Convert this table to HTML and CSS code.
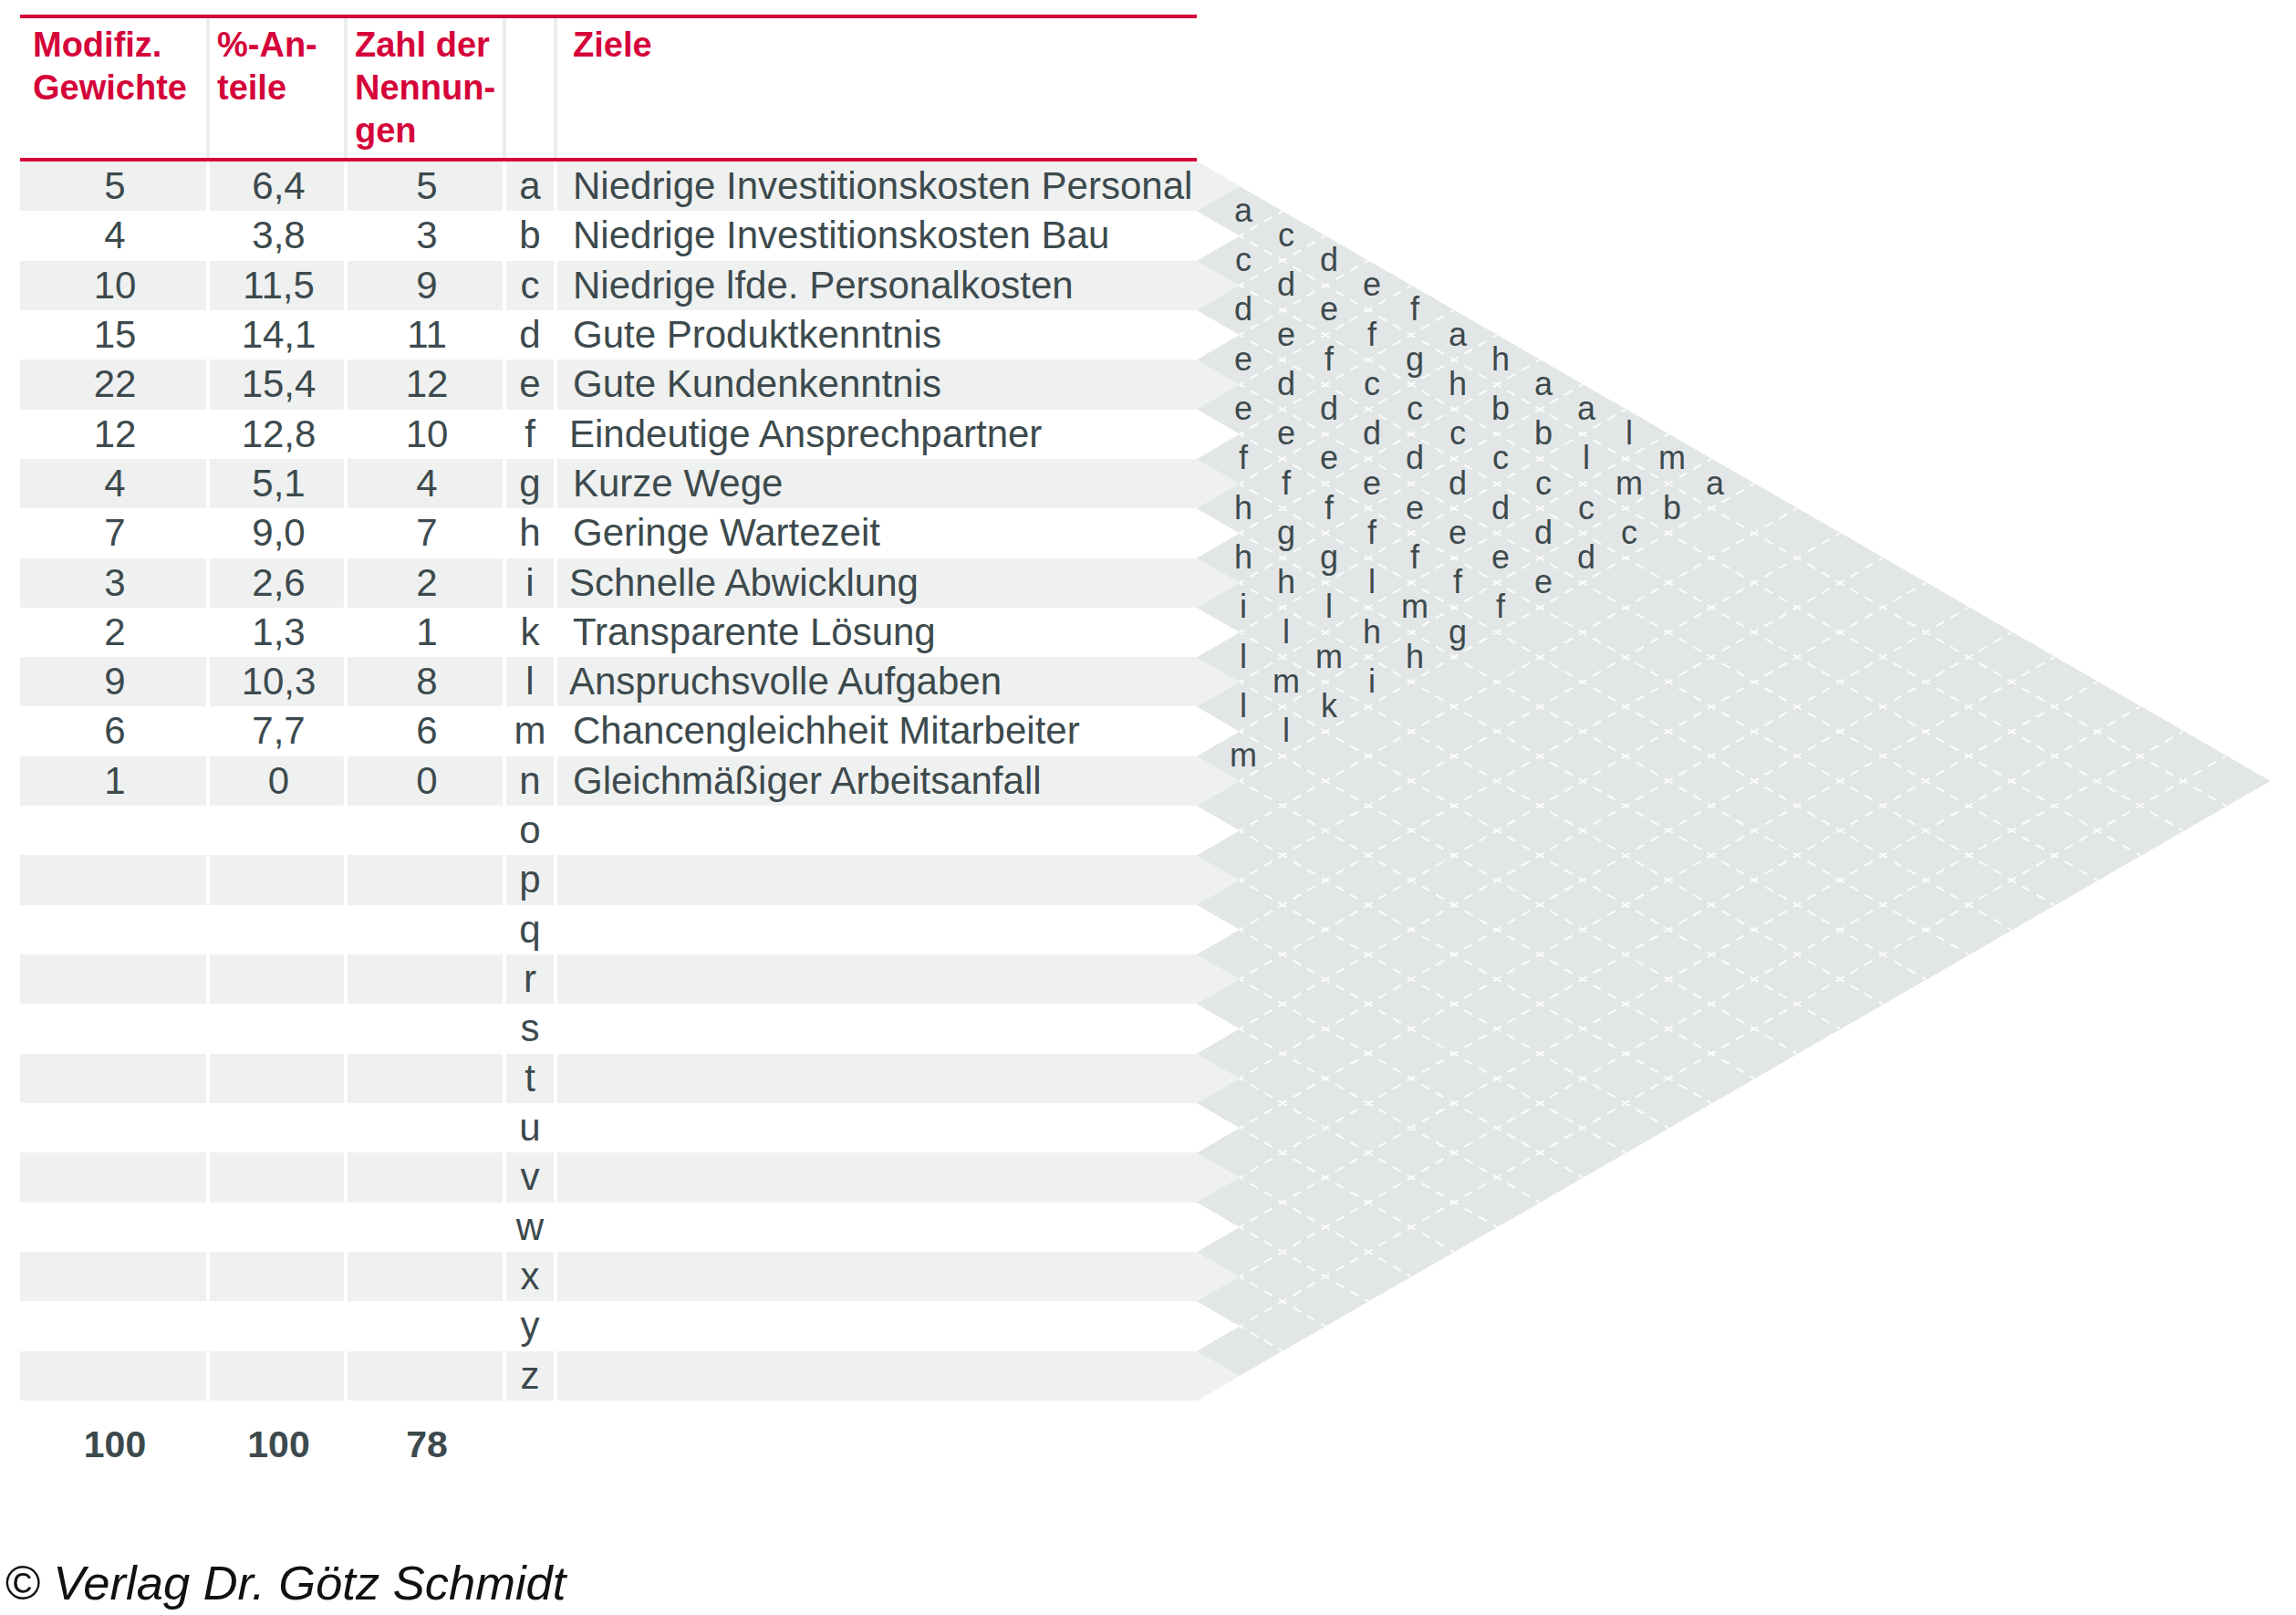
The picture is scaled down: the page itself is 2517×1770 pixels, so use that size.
FILE: index.html
```html
<!DOCTYPE html>
<html lang="de">
<head>
<meta charset="utf-8">
<title>Paarweiser Vergleich – Ziele</title>
<link rel="stylesheet" href="styles.css">
</head>
<body>
<div class="page">
  <div class="chart">
    <div class="table">
      <div class="head">
        <div class="c1">Modifiz.<br>Gewichte</div>
        <div>%-An-<br>teile</div>
        <div>Zahl der<br>Nennun-<br>gen</div>
        <div></div>
        <div class="c5">Ziele</div>
      </div>
      <div class="rows">
        <div class="row"><span>5</span><span>6,4</span><span>5</span><span class="key">a</span><span class="goal">Niedrige Investitionskosten Personal</span></div>
        <div class="row"><span>4</span><span>3,8</span><span>3</span><span class="key">b</span><span class="goal">Niedrige Investitionskosten Bau</span></div>
        <div class="row"><span>10</span><span>11,5</span><span>9</span><span class="key">c</span><span class="goal">Niedrige lfde. Personalkosten</span></div>
        <div class="row"><span>15</span><span>14,1</span><span>11</span><span class="key">d</span><span class="goal">Gute Produktkenntnis</span></div>
        <div class="row"><span>22</span><span>15,4</span><span>12</span><span class="key">e</span><span class="goal">Gute Kundenkenntnis</span></div>
        <div class="row"><span>12</span><span>12,8</span><span>10</span><span class="key">f</span><span class="goal tight">Eindeutige Ansprechpartner</span></div>
        <div class="row"><span>4</span><span>5,1</span><span>4</span><span class="key">g</span><span class="goal">Kurze Wege</span></div>
        <div class="row"><span>7</span><span>9,0</span><span>7</span><span class="key">h</span><span class="goal">Geringe Wartezeit</span></div>
        <div class="row"><span>3</span><span>2,6</span><span>2</span><span class="key">i</span><span class="goal tight">Schnelle Abwicklung</span></div>
        <div class="row"><span>2</span><span>1,3</span><span>1</span><span class="key">k</span><span class="goal">Transparente Lösung</span></div>
        <div class="row"><span>9</span><span>10,3</span><span>8</span><span class="key">l</span><span class="goal tight">Anspruchsvolle Aufgaben</span></div>
        <div class="row"><span>6</span><span>7,7</span><span>6</span><span class="key">m</span><span class="goal">Chancengleichheit Mitarbeiter</span></div>
        <div class="row"><span>1</span><span>0</span><span>0</span><span class="key">n</span><span class="goal">Gleichmäßiger Arbeitsanfall</span></div>
        <div class="row"><span></span><span></span><span></span><span class="key">o</span><span class="goal"></span></div>
        <div class="row"><span></span><span></span><span></span><span class="key">p</span><span class="goal"></span></div>
        <div class="row"><span></span><span></span><span></span><span class="key">q</span><span class="goal"></span></div>
        <div class="row"><span></span><span></span><span></span><span class="key">r</span><span class="goal"></span></div>
        <div class="row"><span></span><span></span><span></span><span class="key">s</span><span class="goal"></span></div>
        <div class="row"><span></span><span></span><span></span><span class="key">t</span><span class="goal"></span></div>
        <div class="row"><span></span><span></span><span></span><span class="key">u</span><span class="goal"></span></div>
        <div class="row"><span></span><span></span><span></span><span class="key">v</span><span class="goal"></span></div>
        <div class="row"><span></span><span></span><span></span><span class="key">w</span><span class="goal"></span></div>
        <div class="row"><span></span><span></span><span></span><span class="key">x</span><span class="goal"></span></div>
        <div class="row"><span></span><span></span><span></span><span class="key">y</span><span class="goal"></span></div>
        <div class="row"><span></span><span></span><span></span><span class="key">z</span><span class="goal"></span></div>
      </div>
      <div class="totals"><span>100</span><span>100</span><span>78</span><span></span><span></span></div>
    </div>

    <svg class="tri" width="1182" height="1358" viewBox="0 0 1182 1358" xmlns="http://www.w3.org/2000/svg">
      <polygon class="tri-bg" points="0,0 1177,679 0,1358"/>
      <path class="chev-light" d="M0,0L47,27.16L0,54.32Z M0,108.64L47,135.8L0,162.96Z M0,217.28L47,244.44L0,271.6Z M0,325.92L47,353.08L0,380.24Z M0,434.56L47,461.72L0,488.88Z M0,543.2L47,570.36L0,597.52Z M0,651.84L47,679L0,706.16Z M0,760.48L47,787.64L0,814.8Z M0,869.12L47,896.28L0,923.44Z M0,977.76L47,1004.92L0,1032.08Z M0,1086.4L47,1113.56L0,1140.72Z M0,1195.04L47,1222.2L0,1249.36Z M0,1303.68L47,1330.84L0,1358Z"/>
      <path class="chev-white" d="M0,54.32L47,81.48L0,108.64Z M0,162.96L47,190.12L0,217.28Z M0,271.6L47,298.76L0,325.92Z M0,380.24L47,407.4L0,434.56Z M0,488.88L47,516.04L0,543.2Z M0,597.52L47,624.68L0,651.84Z M0,706.16L47,733.32L0,760.48Z M0,814.8L47,841.96L0,869.12Z M0,923.44L47,950.6L0,977.76Z M0,1032.08L47,1059.24L0,1086.4Z M0,1140.72L47,1167.88L0,1195.04Z M0,1249.36L47,1276.52L0,1303.68Z"/>
      <path class="grid" d="M47,81.48L1128,706.16 M47,135.8L1081,733.32 M47,190.12L1034,760.48 M47,244.44L987,787.64 M47,298.76L940,814.8 M47,353.08L893,841.96 M47,407.4L846,869.12 M47,461.72L799,896.28 M47,516.04L752,923.44 M47,570.36L705,950.6 M47,624.68L658,977.76 M47,679L611,1004.92 M47,733.32L564,1032.08 M47,787.64L517,1059.24 M47,841.96L470,1086.4 M47,896.28L423,1113.56 M47,950.6L376,1140.72 M47,1004.92L329,1167.88 M47,1059.24L282,1195.04 M47,1113.56L235,1222.2 M47,1167.88L188,1249.36 M47,1222.2L141,1276.52 M47,1276.52L94,1303.68 M47,81.48L94,54.32 M47,135.8L141,81.48 M47,190.12L188,108.64 M47,244.44L235,135.8 M47,298.76L282,162.96 M47,353.08L329,190.12 M47,407.4L376,217.28 M47,461.72L423,244.44 M47,516.04L470,271.6 M47,570.36L517,298.76 M47,624.68L564,325.92 M47,679L611,353.08 M47,733.32L658,380.24 M47,787.64L705,407.4 M47,841.96L752,434.56 M47,896.28L799,461.72 M47,950.6L846,488.88 M47,1004.92L893,516.04 M47,1059.24L940,543.2 M47,1113.56L987,570.36 M47,1167.88L1034,597.52 M47,1222.2L1081,624.68 M47,1276.52L1128,651.84"/>
      <g class="letters">
        <g transform="translate(51,65.82)">
          <text y="0">a</text><text y="54.32">c</text><text y="108.64">d</text><text y="162.96">e</text><text y="217.28">e</text><text y="271.6">f</text><text y="325.92">h</text><text y="380.24">h</text><text y="434.56">i</text><text y="488.88">l</text><text y="543.2">l</text><text y="597.52">m</text>
        </g>
        <g transform="translate(98,92.98)">
          <text y="0">c</text><text y="54.32">d</text><text y="108.64">e</text><text y="162.96">d</text><text y="217.28">e</text><text y="271.6">f</text><text y="325.92">g</text><text y="380.24">h</text><text y="434.56">l</text><text y="488.88">m</text><text y="543.2">l</text>
        </g>
        <g transform="translate(145,120.14)">
          <text y="0">d</text><text y="54.32">e</text><text y="108.64">f</text><text y="162.96">d</text><text y="217.28">e</text><text y="271.6">f</text><text y="325.92">g</text><text y="380.24">l</text><text y="434.56">m</text><text y="488.88">k</text>
        </g>
        <g transform="translate(192,147.3)">
          <text y="0">e</text><text y="54.32">f</text><text y="108.64">c</text><text y="162.96">d</text><text y="217.28">e</text><text y="271.6">f</text><text y="325.92">l</text><text y="380.24">h</text><text y="434.56">i</text>
        </g>
        <g transform="translate(239,174.46)">
          <text y="0">f</text><text y="54.32">g</text><text y="108.64">c</text><text y="162.96">d</text><text y="217.28">e</text><text y="271.6">f</text><text y="325.92">m</text><text y="380.24">h</text>
        </g>
        <g transform="translate(286,201.62)">
          <text y="0">a</text><text y="54.32">h</text><text y="108.64">c</text><text y="162.96">d</text><text y="217.28">e</text><text y="271.6">f</text><text y="325.92">g</text>
        </g>
        <g transform="translate(333,228.78)">
          <text y="0">h</text><text y="54.32">b</text><text y="108.64">c</text><text y="162.96">d</text><text y="217.28">e</text><text y="271.6">f</text>
        </g>
        <g transform="translate(380,255.94)">
          <text y="0">a</text><text y="54.32">b</text><text y="108.64">c</text><text y="162.96">d</text><text y="217.28">e</text>
        </g>
        <g transform="translate(427,283.1)">
          <text y="0">a</text><text y="54.32">l</text><text y="108.64">c</text><text y="162.96">d</text>
        </g>
        <g transform="translate(474,310.26)">
          <text y="0">l</text><text y="54.32">m</text><text y="108.64">c</text>
        </g>
        <g transform="translate(521,337.42)">
          <text y="0">m</text><text y="54.32">b</text>
        </g>
        <g transform="translate(568,364.58)">
          <text y="0">a</text>
        </g>
      </g>
    </svg>
  </div>
  <p class="copy">© Verlag Dr. Götz Schmidt</p>
</div>
</body>
</html>
```

FILE: styles.css
```css
html, body {
  margin: 0;
  padding: 0;
  background: #ffffff;
}

body {
  font-family: "Liberation Sans", Arial, sans-serif;
  color: #3d4a4d;
}

.page {
  padding-top: 16px;
}

.chart {
  display: flex;
  align-items: flex-start;
  padding-left: 22px;
}

.table {
  flex: none;
  width: 1290px;
}

/* header */
.head {
  display: grid;
  grid-template-columns: 204px 147px 170px 52px 701px;
  column-gap: 4px;
  height: 161px;
  box-sizing: border-box;
  border-top: 4px solid #d5033a;
  border-bottom: 4px solid #d5033a;
  background: #eceeee;
}

.head > div {
  background: #ffffff;
  padding: 6px 0 0 8px;
  font-weight: bold;
  font-size: 38px;
  line-height: 47px;
  color: #d5033a;
  white-space: nowrap;
}

.head > .c1 {
  padding-left: 14px;
}

.head > .c5 {
  padding-left: 17px;
}

/* body rows */
.row {
  display: grid;
  grid-template-columns: 204px 147px 170px 52px 701px;
  column-gap: 4px;
  height: 54.32px;
}

.row > span {
  display: block;
  box-sizing: border-box;
  padding-left: 4px;
  font-size: 42px;
  line-height: 54.32px;
  text-align: center;
  white-space: nowrap;
}

.row:nth-child(odd) > span {
  background: #eff1f0;
}

.row > .key {
  padding-left: 0;
}

.row > .goal {
  text-align: left;
  padding-left: 17px;
}

.row > .goal.tight {
  padding-left: 13px;
}

/* totals */
.totals {
  display: grid;
  grid-template-columns: 204px 147px 170px 52px 701px;
  column-gap: 4px;
  margin-top: 21px;
}

.totals > span {
  box-sizing: border-box;
  padding-left: 4px;
  font-weight: bold;
  font-size: 41px;
  line-height: 54px;
  text-align: center;
  height: 54px;
}

/* paired comparison triangle */
.tri {
  flex: none;
  display: block;
  margin-top: 161px;
  overflow: visible;
}

.tri-bg {
  fill: #e3e6e7;
}

.chev-light {
  fill: #eff1f0;
}

.chev-white {
  fill: #ffffff;
}

.grid {
  fill: none;
  stroke: #fcfcfc;
  stroke-width: 2;
  stroke-dasharray: 10 8.1;
  stroke-dashoffset: 5;
}

.letters text {
  font-family: "Liberation Sans", Arial, sans-serif;
  font-size: 36px;
  fill: #3d4a4d;
  text-anchor: middle;
}

/* footer */
.copy {
  margin: 95px 0 0 5px;
  font-family: "Liberation Sans", Arial, sans-serif;
  font-style: italic;
  font-size: 52.5px;
  line-height: 60px;
  color: #111111;
}
```
